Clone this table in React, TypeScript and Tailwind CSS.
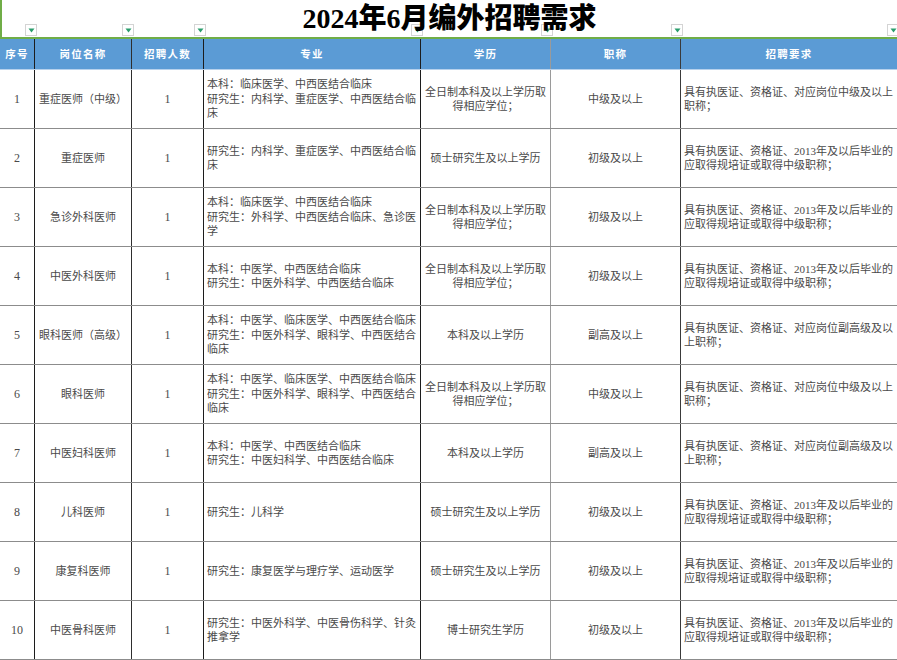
import React from "react";

type Row = {
  no: string;
  name: string;
  count: string;
  major: string[];
  edu: string[];
  title: string;
  req: string[];
};

const R2013 = ["具有执医证、资格证、2013年及以后毕业的", "应取得规培证或取得中级职称；"];
const QZ = ["全日制本科及以上学历取", "得相应学位；"];

const rows: Row[] = [
  { no: "1", name: "重症医师（中级）", count: "1", major: ["本科：临床医学、中西医结合临床", "研究生：内科学、重症医学、中西医结合临", "床"], edu: QZ, title: "中级及以上", req: ["具有执医证、资格证、对应岗位中级及以上", "职称；"] },
  { no: "2", name: "重症医师", count: "1", major: ["研究生：内科学、重症医学、中西医结合临", "床"], edu: ["硕士研究生及以上学历"], title: "初级及以上", req: R2013 },
  { no: "3", name: "急诊外科医师", count: "1", major: ["本科：临床医学、中西医结合临床", "研究生：外科学、中西医结合临床、急诊医", "学"], edu: QZ, title: "初级及以上", req: R2013 },
  { no: "4", name: "中医外科医师", count: "1", major: ["本科：中医学、中西医结合临床", "研究生：中医外科学、中西医结合临床"], edu: QZ, title: "初级及以上", req: R2013 },
  { no: "5", name: "眼科医师（高级）", count: "1", major: ["本科：中医学、临床医学、中西医结合临床", "研究生：中医外科学、眼科学、中西医结合", "临床"], edu: ["本科及以上学历"], title: "副高及以上", req: ["具有执医证、资格证、对应岗位副高级及以", "上职称；"] },
  { no: "6", name: "眼科医师", count: "1", major: ["本科：中医学、临床医学、中西医结合临床", "研究生：中医外科学、眼科学、中西医结合", "临床"], edu: QZ, title: "中级及以上", req: ["具有执医证、资格证、对应岗位中级及以上", "职称；"] },
  { no: "7", name: "中医妇科医师", count: "1", major: ["本科：中医学、中西医结合临床", "研究生：中医妇科学、中西医结合临床"], edu: ["本科及以上学历"], title: "副高及以上", req: ["具有执医证、资格证、对应岗位副高级及以", "上职称；"] },
  { no: "8", name: "儿科医师", count: "1", major: ["研究生：儿科学"], edu: ["硕士研究生及以上学历"], title: "初级及以上", req: R2013 },
  { no: "9", name: "康复科医师", count: "1", major: ["研究生：康复医学与理疗学、运动医学"], edu: ["硕士研究生及以上学历"], title: "初级及以上", req: R2013 },
  { no: "10", name: "中医骨科医师", count: "1", major: ["研究生：中医外科学、中医骨伤科学、针灸", "推拿学"], edu: ["博士研究生学历"], title: "初级及以上", req: R2013 },
];

const grid = "grid grid-cols-[35px_97px_72px_217px_130px_130px_216px]";
const vb = [
  "border-r border-[#1c1c1c]",
  "border-r border-[#2e2e2e]",
  "border-r border-[#1c1c1c]",
  "border-r border-[#1c1c1c]",
  "border-r border-[#9a9a9a]",
  "border-r border-[#3a3a3a]",
  "",
];

const cellFont = { fontFamily: '"Liberation Serif", "Noto Sans CJK SC", serif' };

function Drop() {
  return (
    <div className="absolute right-0 bottom-[1px] w-[12px] h-[12px] bg-white border border-[#d4d4d4] flex items-center justify-center">
      <svg width="7" height="5" viewBox="0 0 7 5">
        <path d="M0.5 0.5 L6.5 0.5 L3.5 4.5 Z" fill="#2a9d6c" />
      </svg>
    </div>
  );
}

const heads = ["序号", "岗位名称", "招聘人数", "专业", "学历", "职称", "招聘要求"];

export default function App() {
  return (
    <div className="w-[897px] h-[660px] bg-white overflow-hidden">
      {/* title row */}
      <div className="relative h-[39px] border-b-2 border-l-2 border-[#70ad47]">
        <div className={`${grid} h-full absolute inset-0`}>
          {heads.map((h) => (
            <div key={h} className="relative">
              <Drop />
            </div>
          ))}
        </div>
        <div
          className="relative h-full flex items-center justify-center text-[28px] font-black text-black leading-none pt-[1px]"
          style={{ fontFamily: '"Liberation Serif", "Noto Sans CJK SC", serif' }}
        >
          2024年6月编外招聘需求
        </div>
      </div>
      {/* header row */}
      <div className={`${grid} h-[31px] bg-[#5b9bd5] border-b border-[#b7d1ec]`}>
        {heads.map((h, i) => (
          <div
            key={h}
            className={`${vb[i]} flex items-center justify-center text-white font-bold text-[10.5px] tracking-[1.2px]`}
            style={{ fontFamily: '"Noto Sans CJK SC", sans-serif' }}
          >
            {h}
          </div>
        ))}
      </div>
      {/* body rows */}
      {rows.map((r) => (
        <div key={r.no} className={`${grid} h-[59px] border-b border-[#8c8c8c] text-[11px] leading-[14.5px] text-[#4a4a4a]`} style={cellFont}>
          <div className={`${vb[0]} flex items-center justify-center text-[12px]`}>{r.no}</div>
          <div className={`${vb[1]} flex items-center justify-center whitespace-nowrap`}>{r.name}</div>
          <div className={`${vb[2]} flex items-center justify-center text-[12px]`}>{r.count}</div>
          <div className={`${vb[3]} flex flex-col justify-center pl-[3px]`}>
            {r.major.map((l, i) => (
              <div key={i} className="whitespace-nowrap">{l}</div>
            ))}
          </div>
          <div className={`${vb[4]} flex flex-col justify-center items-center`}>
            {r.edu.map((l, i) => (
              <div key={i} className="whitespace-nowrap">{l}</div>
            ))}
          </div>
          <div className={`${vb[5]} flex items-center justify-center`}>{r.title}</div>
          <div className="flex flex-col justify-center pl-[3px]">
            {r.req.map((l, i) => (
              <div key={i} className="whitespace-nowrap">{l}</div>
            ))}
          </div>
        </div>
      ))}
    </div>
  );
}
